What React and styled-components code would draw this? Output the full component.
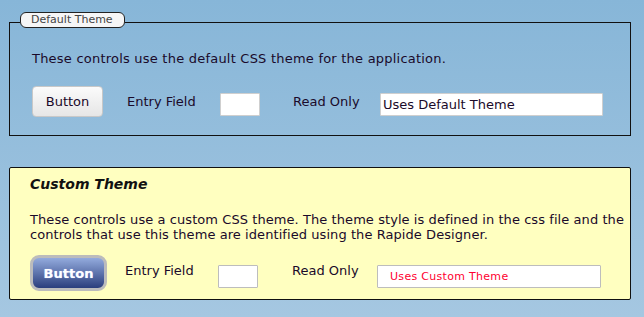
import React from 'react';
import styled, { createGlobalStyle } from 'styled-components';

// Page wide reset and the blue backdrop
const GlobalStyle = createGlobalStyle`
  html, body {
    margin: 0;
    padding: 0;
  }
  body {
    width: 644px;
    height: 317px;
    overflow: hidden;
    background: linear-gradient(#87b6d8, #a5c7e1);
    font-family: "DejaVu Sans", Verdana, sans-serif;
    color: #1a0a2a;
  }
`;

const Page = styled.div`
  display: flex;
  flex-direction: column;
  gap: 31px;
  padding: 14px 12px 0 9px;
`;

// Default theme group box
const GroupBox = styled.fieldset`
  margin: 0;
  padding: 21px 20px 18px 22px;
  border: 1px solid #111;
  width: 622px;
  box-sizing: border-box;
  min-width: 0;
`;

// sits over the top border, nudged up a little like the original
const Legend = styled.legend`
  position: relative;
  top: -2px;
  margin-left: -12px;
  padding: 0 0 0 10px;
  width: 93px;
  height: 14px;
  line-height: 14px;
  font-size: 11px;
  color: #444;
  background: #f6f6f6;
  border: 1px solid #222;
  border-radius: 6px;
  box-sizing: content-box;
`;

// Custom theme panel
const Panel = styled.div`
  width: 622px;
  box-sizing: border-box;
  background: #ffffc0;
  border: 1px solid #111;
  border-radius: 2px;
  padding: 7px 10px 8px 20px;
`;

const PanelTitle = styled.h3`
  margin: 0 0 19px;
  font-size: 14px;
  font-weight: bold;
  font-style: italic;
  line-height: 18px;
  color: #111;
`;

const Intro = styled.p`
  margin: 0 0 ${(p) => p.$gap}px;
  font-size: 13px;
  line-height: 15px;
  letter-spacing: ${(p) => p.$track || 0}px;
  white-space: nowrap;
`;

const ControlRow = styled.div`
  display: flex;
  align-items: center;
`;

const PlainButton = styled.button`
  width: 71px;
  height: 31px;
  margin-right: 24px;
  padding: 0;
  border: 1px solid #c8c8c8;
  border-radius: 4px;
  background: linear-gradient(#fbfbfb, #e6e6e6);
  font-family: inherit;
  font-size: 13px;
  color: #1a0a2a;
`;

const FancyButton = styled.button`
  width: 77px;
  height: 36px;
  margin-right: 18px;
  padding: 0;
  border: 3px solid #bcbcbc;
  border-radius: 9px;
  background: linear-gradient(#93abdd, #2a3e7d);
  font-family: inherit;
  font-size: 13px;
  font-weight: bold;
  color: #fff;
  text-shadow: 0 0 1px #a8c0ff;
`;

const Label = styled.span`
  width: ${(p) => p.$w}px;
  font-size: 13px;
  line-height: 16px;
  margin-bottom: ${(p) => p.$lift || 0}px;
`;

const Field = styled.input`
  width: ${(p) => p.$w}px;
  height: 23px;
  box-sizing: border-box;
  margin: 6px ${(p) => p.$after || 0}px 0 0;
  padding: 0 0 0 ${(p) => p.$pad || 2}px;
  border: 1px solid ${(p) => p.$border || '#cfcfcf'};
  border-radius: 1px;
  background: #fff;
  font-family: inherit;
  font-size: ${(p) => p.$size || 13}px;
  letter-spacing: ${(p) => p.$spacing || 0}px;
  color: ${(p) => p.$color || '#1a0a2a'};
  outline: none;
`;

const App = () => {
  return (
    <>
      <GlobalStyle />
      <Page>
        <GroupBox>
          <Legend>Default Theme</Legend>
          <Intro $gap={20} $track={0.22}>
            These controls use the default CSS theme for the application.
          </Intro>
          <ControlRow>
            <PlainButton>Button</PlainButton>
            <Label $w={93}>Entry Field</Label>
            <Field $w={40} $after={33} />
            <Label $w={87}>Read Only</Label>
            <Field $w={223} readOnly value="Uses Default Theme" />
          </ControlRow>
        </GroupBox>

        <Panel>
          <PanelTitle>Custom Theme</PanelTitle>
          <Intro $gap={13} $track={0.07}>
            These controls use a custom CSS theme. The theme style is defined in the css file and the
            <br />
            controls that use this theme are identified using the Rapide Designer.
          </Intro>
          <ControlRow>
            <FancyButton>Button</FancyButton>
            <Label $w={93} $lift={5}>Entry Field</Label>
            <Field $w={40} $after={34} $border="#bdbdbd" />
            <Label $w={85} $lift={5}>Read Only</Label>
            <Field
              $w={224}
              $pad={12}
              $size={11}
              $spacing={0.3}
              $color="#ff0030"
              $border="#bdbdbd"
              readOnly
              value="Uses Custom Theme"
            />
          </ControlRow>
        </Panel>
      </Page>
    </>
  );
};

export default App;
